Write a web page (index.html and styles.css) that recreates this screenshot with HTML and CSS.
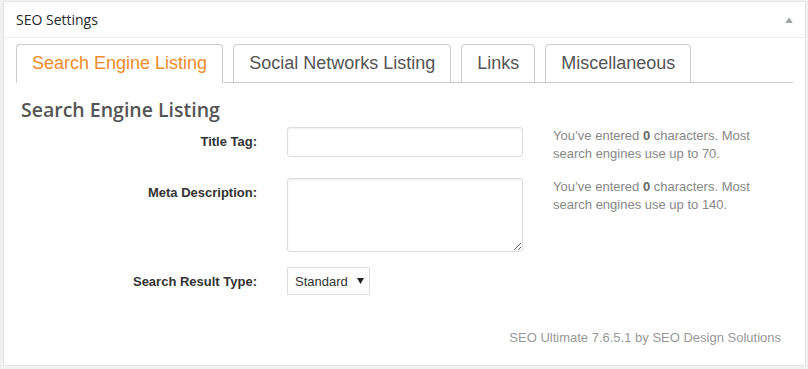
FILE: index.html
```html
<!DOCTYPE html>
<html lang="en">
<head>
<meta charset="utf-8">
<title>SEO Settings</title>
<link rel="stylesheet" href="styles.css">
</head>
<body>
<div class="postbox">
  <div class="postbox-header">
    <h2 class="hndle">SEO Settings</h2>
    <span class="toggle" aria-hidden="true">
      <svg width="8" height="6" viewBox="0 0 8 6"><path d="M4 0.5 L7.8 6 L0.2 6 Z" fill="#a0a5aa"/></svg>
    </span>
  </div>
  <div class="inside">
    <ul class="tabs">
      <li class="tab tab-active">Search Engine Listing</li>
      <li class="tab">Social Networks Listing</li>
      <li class="tab">Links</li>
      <li class="tab">Miscellaneous</li>
    </ul>
    <div class="panel">
      <h3 class="panel-title">Search Engine Listing</h3>
      <div class="form-grid">
        <label class="field-label" for="title-tag">Title Tag:</label>
        <input class="text-input" id="title-tag" type="text">
        <div class="help">You’ve entered <strong>0</strong> characters. Most search engines use up to 70.</div>

        <label class="field-label" for="meta-desc">Meta Description:</label>
        <textarea class="text-area" id="meta-desc"></textarea>
        <div class="help">You’ve entered <strong>0</strong> characters. Most search engines use up to 140.</div>

        <label class="field-label" for="result-type">Search Result Type:</label>
        <span class="select-wrap">
          <select class="select" id="result-type"><option>Standard</option></select>
          <svg class="select-arrow" width="7" height="6" viewBox="0 0 7 6"><path d="M0 0 L7 0 L3.5 6 Z" fill="#222"/></svg>
        </span>
        <div class="help"></div>
      </div>
    </div>
    <div class="footer">SEO Ultimate 7.6.5.1 by SEO Design Solutions</div>
  </div>
</div>
</body>
</html>
```

FILE: styles.css
```css
html, body {
  margin: 0;
  padding: 0;
  background: #f1f1f1;
}

body {
  font-family: "Liberation Sans", Arial, sans-serif;
  font-size: 13px;
  color: #444;
}

.postbox {
  margin: 1px 2px 0 3px;
  background: #fff;
  border: 1px solid #e5e5e5;
  box-shadow: 0 1px 1px rgba(0, 0, 0, 0.04);
}

.postbox-header {
  display: flex;
  align-items: center;
  justify-content: space-between;
  border-bottom: 1px solid #eee;
}

.hndle {
  margin: 0;
  padding: 8px 12px;
  font-family: "Open Sans", "Noto Sans", sans-serif;
  font-size: 14px;
  font-weight: 400;
  line-height: 19px;
  color: #23282d;
}

.toggle {
  display: flex;
  padding-right: 12px;
  padding-top: 1px;
}

.inside {
  padding: 0 12px 18px;
}

.tabs {
  display: flex;
  gap: 10px;
  margin: 6px 0 0;
  padding: 0;
  list-style: none;
  border-bottom: 1px solid #ccc;
}

.tab {
  margin-bottom: -1px;
  padding: 8px 15px;
  border: 1px solid #ccc;
  border-radius: 4px 4px 0 0;
  background: #fff;
  font-size: 18px;
  line-height: 21px;
  color: #555;
  white-space: nowrap;
}

.tab-active {
  border-bottom-color: #fff;
  color: #f08c2a;
}

.panel {
  padding: 0 5px;
}

.panel-title {
  margin: 14px 0 4px;
  font-family: "Open Sans", "Noto Sans", sans-serif;
  font-size: 19.5px;
  font-weight: 600;
  line-height: 26px;
  color: #555;
}

.form-grid {
  display: grid;
  grid-template-columns: 236px 236px 1fr;
  column-gap: 30px;
  row-gap: 15px;
  align-items: start;
}

.field-label {
  padding-top: 6px;
  text-align: right;
  font-weight: 700;
  font-size: 13px;
  line-height: 18px;
  color: #333;
}

.text-input,
.text-area {
  box-sizing: border-box;
  width: 236px;
  margin: 0;
  border: 1px solid #ddd;
  border-radius: 3px;
  box-shadow: inset 0 1px 2px rgba(0, 0, 0, 0.07);
  background: #fff;
  font-family: "Liberation Sans", Arial, sans-serif;
  font-size: 13px;
  outline: none;
}

.text-input {
  height: 30px;
}

.text-area {
  height: 74px;
  display: block;
  resize: both;
}

.help {
  font-size: 13px;
  line-height: 18px;
  color: #888;
}

.help strong {
  color: #666;
}

.select-wrap {
  position: relative;
  justify-self: start;
  display: block;
  width: 83px;
  height: 28px;
}

.select {
  box-sizing: border-box;
  width: 83px;
  height: 28px;
  margin: 0;
  padding: 0 0 0 7px;
  border: 1px solid #ddd;
  border-radius: 0;
  background: #fff;
  -webkit-appearance: none;
  appearance: none;
  font-family: "Liberation Sans", Arial, sans-serif;
  font-size: 13px;
  color: #333;
  outline: none;
}

.select-arrow {
  position: absolute;
  left: 70px;
  top: 11px;
  pointer-events: none;
}

.footer {
  margin-top: 34px;
  padding-right: 12px;
  text-align: right;
  font-size: 13px;
  line-height: 18px;
  color: #999;
}
```
